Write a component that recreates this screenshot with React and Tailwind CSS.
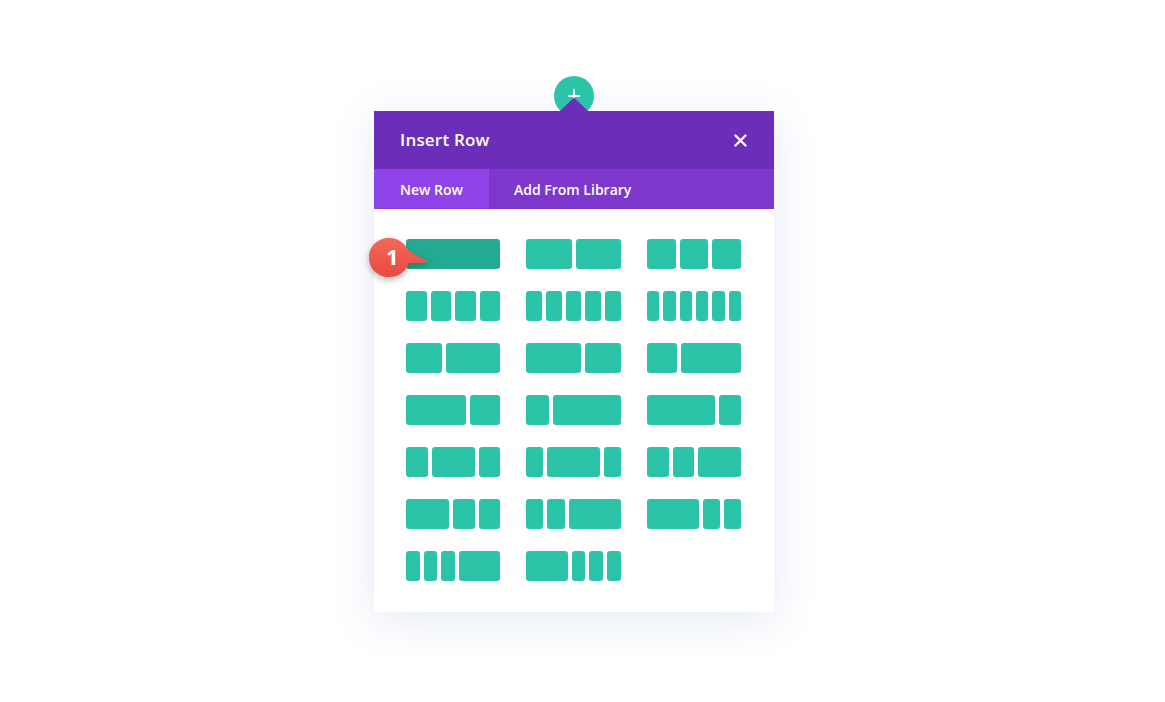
import React from "react";

const layouts = [
  [12], [6, 6], [4, 4, 4],
  [3, 3, 3, 3], [1, 1, 1, 1, 1], [1, 1, 1, 1, 1, 1],
  [2, 3], [3, 2], [1, 2],
  [2, 1], [1, 3], [3, 1],
  [1, 2, 1], [1, 3, 1], [1, 1, 2],
  [2, 1, 1], [1, 1, 3], [3, 1, 1],
  [1, 1, 1, 3], [3, 1, 1, 1],
];

function Layout({ parts, active }) {
  return (
    <div className="flex h-[30px] gap-1">
      {parts.map((p, i) => (
        <div
          key={i}
          className={`h-full rounded-[3px] ${active ? "bg-[#22ab92]" : "bg-[#2bc4a9]"}`}
          style={{ flexGrow: p, flexBasis: 0 }}
        />
      ))}
    </div>
  );
}

export default function App() {
  return (
    <div
      className="w-[1165px] h-[702px] bg-white overflow-hidden pl-[374px] pt-[111px]"
      style={{ fontFamily: '"Open Sans", "Noto Sans", sans-serif' }}
    >
      <div className="relative w-[400px] bg-white shadow-[0_8px_40px_rgba(90,120,200,0.16)]">
        {/* top add button */}
        <div className="absolute left-[180px] top-[-35px] w-[40px] h-[40px] rounded-full bg-[#2bc4a9] flex justify-center">
          <div className="relative w-[12px] h-[12px] mt-[13px]">
            <div className="absolute left-[5px] top-0 w-[2px] h-[12px] bg-white" />
            <div className="absolute left-0 top-[6px] w-[12px] h-[2px] bg-white" />
          </div>
        </div>
        <svg className="absolute left-[185px] top-[-14px]" width="30" height="15" viewBox="0 0 30 15">
          <polygon points="0,15 15,0.5 30,15" fill="#6c2eb9" />
        </svg>

        {/* header */}
        <div className="relative h-[58px] bg-[#6c2eb9] flex items-center justify-between pl-[26px] pr-[27px]">
          <span className="text-white text-[17px] font-semibold tracking-[0.2px]">Insert Row</span>
          <svg width="13" height="13" viewBox="0 0 13 13">
            <path d="M1.5 1.5 L11.5 11.5 M11.5 1.5 L1.5 11.5" stroke="white" strokeWidth="2.4" strokeLinecap="round" />
          </svg>
        </div>
        {/* tabs */}
        <div className="h-[40px] bg-[#7e37cd] flex text-white text-[14px] font-semibold">
          <div className="w-[115px] bg-[#8e43e8] flex items-center pl-[26px]">New Row</div>
          <div className="flex items-center pl-[25px]">Add From Library</div>
        </div>
        {/* body */}
        <div className="relative pt-[30px] pb-[31px] pl-[32px]">
          <div className="grid grid-cols-[94px_95px_94px] gap-x-[26px] gap-y-[22px]">
            {layouts.map((l, i) => (
              <Layout key={i} parts={l} active={i === 0} />
            ))}
          </div>
          {/* badge */}
          <svg
            className="absolute left-[-7px] top-[27px]"
            width="72"
            height="50"
            viewBox="0 0 72 50"
            style={{ filter: "drop-shadow(0 3px 3px rgba(0,0,0,0.28))" }}
          >
            <defs>
              <linearGradient id="bg" x1="0" y1="0" x2="0" y2="1">
                <stop offset="0" stopColor="#f4685c" />
                <stop offset="1" stopColor="#e9493f" />
              </linearGradient>
            </defs>
            <path
              d="M22 2 C32 2 38 8 41 14 C48 19 56 23 63 26 C55 27 48 27 42 27 C39 35 32 41 22 41 C11 41 2 33 2 21.5 C2 10 11 2 22 2 Z"
              fill="url(#bg)"
            />
          </svg>
          <span className="absolute left-[12px] top-[32px] text-white text-[22px] font-bold leading-[30px]">1</span>
        </div>
      </div>
    </div>
  );
}
